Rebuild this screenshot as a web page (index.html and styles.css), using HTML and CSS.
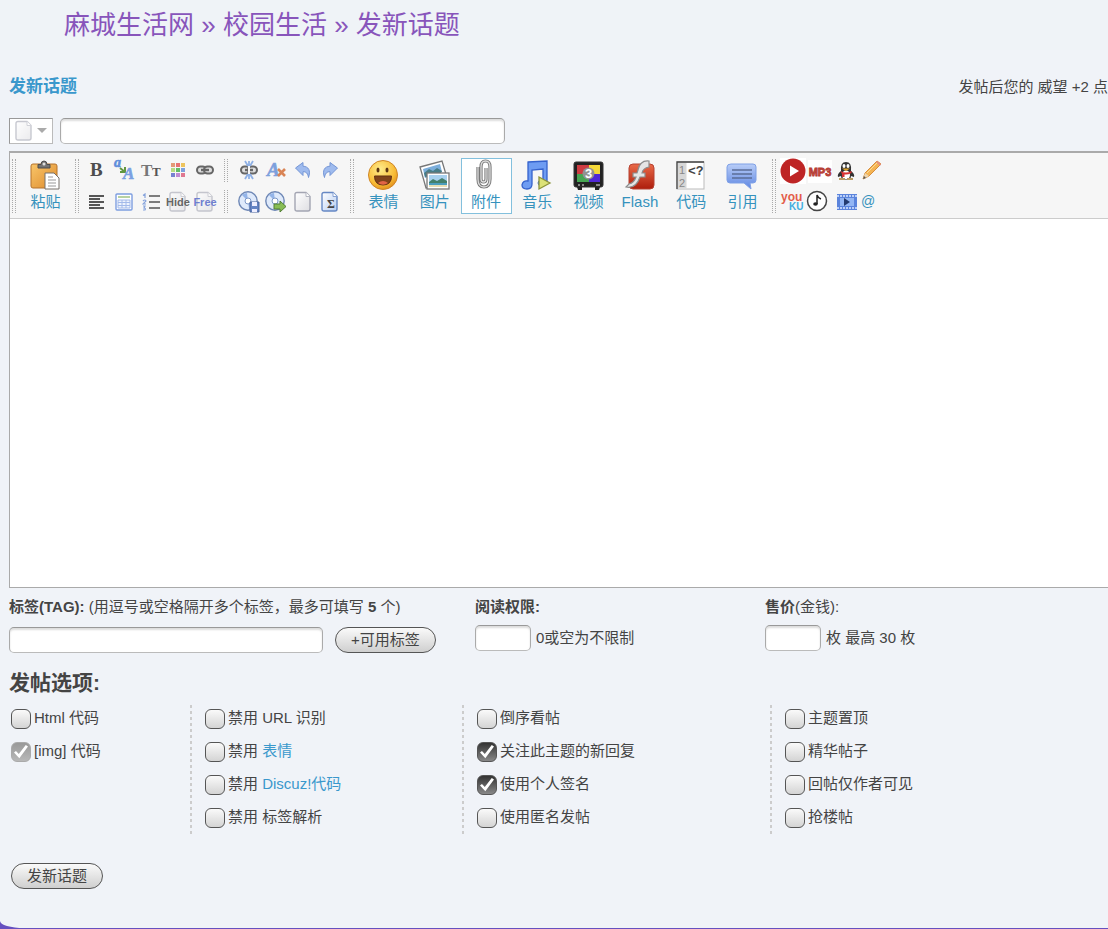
FILE: index.html
```html
<!DOCTYPE html>
<html lang="zh-CN">
<head>
<meta charset="utf-8">
<meta name="viewport" content="width=device-width, initial-scale=1">
<title>发新话题</title>
<link rel="stylesheet" href="styles.css">
</head>
<body>
<svg class="defs" aria-hidden="true">
  <defs>
    <linearGradient id="orange" x1="0" y1="0" x2="1" y2="1"><stop offset="0" stop-color="#f9c66a"/><stop offset="1" stop-color="#dd8a2c"/></linearGradient>
    <linearGradient id="blue" x1="0" y1="0" x2="0" y2="1"><stop offset="0" stop-color="#b9cdf7"/><stop offset="1" stop-color="#5d86e2"/></linearGradient>
    <linearGradient id="paper" x1="0" y1="0" x2="1" y2="1"><stop offset="0" stop-color="#ffffff"/><stop offset="1" stop-color="#dedee2"/></linearGradient>
    <linearGradient id="sheet" x1="0" y1="0" x2="1" y2="1"><stop offset="0" stop-color="#ffffff"/><stop offset="1" stop-color="#b6cdf2"/></linearGradient>
    <linearGradient id="red" x1="0" y1="0" x2="0" y2="1"><stop offset="0" stop-color="#ea6a48"/><stop offset="1" stop-color="#ad1d0c"/></linearGradient>
    <radialGradient id="face" cx=".4" cy=".3" r=".75"><stop offset="0" stop-color="#ffec8c"/><stop offset=".7" stop-color="#f8ba33"/><stop offset="1" stop-color="#de8a1c"/></radialGradient>
    <symbol id="disc" viewBox="0 0 22 22">
      <circle cx="10" cy="10" r="9.200" fill="#dfeafb" stroke="#6e87b5" stroke-width="1.400"/>
      <path d="M10 10 4 4a8 8 0 0 1 5-2ZM10 10l6 6a8 8 0 0 1-5 2Z" fill="#93b4e8"/>
      <circle cx="10" cy="10" r="3" fill="#fff" stroke="#7c98c8"/>
    </symbol>
    <symbol id="page" viewBox="0 0 18 22">
      <path d="M3 1.500h9l4 4v12.500q0 2-2 2H3q-2 0-2-2V3.500q0-2 2-2Z" fill="url(#paper)" stroke="#a3a5b2" stroke-width="1.400"/>
      <path d="M12 1.500v4h4" fill="#fff" stroke="#b3b5c0"/>
    </symbol>
    <symbol id="chain" viewBox="0 0 18 12">
      <g fill="#ddd" stroke="#666" stroke-width="2"><rect x="1" y="2.500" width="9" height="7" rx="3.500"/><rect x="8" y="2.500" width="9" height="7" rx="3.500"/></g>
      <path d="M5 6h8" stroke="#666" stroke-width="2.400"/>
    </symbol>
    <symbol id="undo" viewBox="0 0 18 18">
      <path d="M1.500 7 9 1.500v3.700c5.500.3 8 4.300 5.500 11.300-.5-4-2.500-6-5.500-5.800v3.800Z" fill="#9fbbee" stroke="#7596d6"/>
    </symbol>
  </defs>
</svg>
<main class="panel">
  <h1 class="crumbs"><a href="#">麻城生活网</a> » <a href="#">校园生活</a> » 发新话题</h1>
  <form class="post">
    <div class="head">
      <h2 class="head-title">发新话题</h2>
      <p class="head-note">发帖后您的 威望 +2 点</p>
    </div>

    <div class="subject">
      <button type="button" class="type-picker" aria-label="主题图标">
        <svg width="18" height="22" opacity=".6"><use href="#page"/></svg>
        <svg width="10" height="6"><path d="M0 0h10L5 5Z" fill="#aaa"/></svg>
      </button>
      <input type="text" class="field subject-field" aria-label="标题">
    </div>

    <div class="editor">
      <div class="toolbar">
        <span class="sep"></span>
        <button type="button" class="big">
          <svg width="32" height="32" viewBox="0 0 32 32">
            <rect x="1" y="5" width="26" height="24" rx="2" fill="url(#orange)" stroke="#b5732d"/>
            <path d="M8 5.500h3q0-3.500 3-3.500t3 3.500h3V9H8Z" fill="#737373" stroke="#4c4c4c"/>
            <circle cx="14" cy="5" r="1.500" fill="#ddd"/>
            <path d="M15 14h9l5 5v11H15Z" fill="#fff" stroke="#77716a"/>
            <path d="M18 18h5M18 21h8M18 24h8M18 27h8" stroke="#999"/>
          </svg>
          粘贴
        </button>
        <span class="sep"></span>

        <div class="icons icons-text">
          <button type="button" aria-label="粗体"><svg width="20" height="20"><text x="3" y="16" class="serif" font-size="19" font-weight="700" fill="#4d4d4d">B</text></svg></button>
          <button type="button" aria-label="字体"><svg width="24" height="24"><path d="m8 10 5 4m0-5v5H8" fill="none" stroke="#62973f" stroke-width="2"/><text x="2" y="9" class="serif" font-size="14" font-weight="700" font-style="italic" fill="#5f8edb" stroke="#5f8edb" stroke-width=".6">a</text><text x="11" y="21" class="serif" font-size="17" font-weight="700" font-style="italic" fill="#7aa0e2" stroke="#7aa0e2" stroke-width=".6">A</text></svg></button>
          <button type="button" aria-label="大小"><svg width="22" height="20"><text x="1" y="16" class="serif" font-size="17" font-weight="700" fill="#777">T</text><text x="12" y="16" class="serif" font-size="13" font-weight="700" fill="#555">T</text></svg></button>
          <button type="button" aria-label="颜色"><svg width="16" height="16"><path fill="#e49a78" d="M1 1h4v4H1z"/><path fill="#e87373" d="M6 1h4v4H6z"/><path fill="#edc45d" d="M11 1h4v4h-4z"/><path fill="#b8dc83" d="M1 6h4v4H1z"/><path fill="#64bd67" d="M6 6h4v4H6z"/><path fill="#7da2de" d="M11 6h4v4h-4z"/><path fill="#7782d0" d="M1 11h4v4H1z"/><path fill="#bf8bd3" d="M6 11h4v4H6z"/><path fill="#df7891" d="M11 11h4v4h-4z"/></svg></button>
          <button type="button" aria-label="链接"><svg width="18" height="12"><use href="#chain"/></svg></button>
          <button type="button" aria-label="对齐"><svg width="16" height="16"><path d="M0 2h15M0 5h11M0 8h15M0 11h11M0 14h15" stroke="#222" stroke-width="1.600"/></svg></button>
          <button type="button" aria-label="表格"><svg width="18" height="20"><rect x="1" y="2" width="16" height="16" rx="1" fill="#fff" stroke="#7e9ee0" stroke-width="1.400"/><path d="M3 4h12v2H3z" fill="#b7d2a3"/><path d="M3 8h12v8H3ZM7 8v8M11 8v8M3 10.500h12M3 13.500h12" fill="#eef3fd" stroke="#a3baea"/></svg></button>
          <button type="button" aria-label="列表"><svg width="18" height="18"><path d="M7 3h11M7 9h11M7 15h11" stroke="#555" stroke-width="1.600"/><path d="M1 2.500 3 1v4M1 8q2-2 3 0l-3 3h3M1 13h2l-1 2q2 0 1 2H1" fill="none" stroke="#86a3dc" stroke-width="1.200"/></svg></button>
          <button type="button" aria-label="隐藏"><svg width="26" height="22"><use href="#page" x="4" width="18" height="22" opacity=".6"/><text x="13" y="15" text-anchor="middle" class="caps" font-size="11" font-weight="700" fill="#666">Hide</text></svg></button>
          <button type="button" aria-label="免费"><svg width="26" height="22"><use href="#page" x="4" width="18" height="22" opacity=".6"/><text x="13" y="15" text-anchor="middle" class="caps" font-size="11" font-weight="700" fill="#6f80d0">Free</text></svg></button>
        </div>
        <span class="sep sep-split"></span>

        <div class="icons icons-edit">
          <button type="button" aria-label="移除链接"><svg width="20" height="20"><use href="#chain" x="1" y="4" width="18" height="12"/><path d="M9 4h2v12H9z" fill="#f6f6f6"/><path d="m6 1 3 5m5-5-3 5M6 19l3-5m5 5-3-5M10 1v5m0 8v5" fill="none" stroke="#8eb0e5" stroke-width="1.800"/></svg></button>
          <button type="button" aria-label="清除格式"><svg width="22" height="20"><text x="2" y="16" class="serif" font-size="19" font-weight="700" font-style="italic" fill="#7da0dc" stroke="#7da0dc" stroke-width=".6">A</text><path d="m13 9 7 7m0-7-7 7" stroke="#d98455" stroke-width="2.600"/></svg></button>
          <button type="button" aria-label="撤销"><svg width="18" height="18"><use href="#undo"/></svg></button>
          <button type="button" aria-label="重做"><svg width="18" height="18" class="flip"><use href="#undo"/></svg></button>
          <button type="button" aria-label="保存数据"><svg width="22" height="22"><use href="#disc"/><path d="M12 11h9v10h-9Z" fill="#6584c4" stroke="#4b659d"/><path d="M14 11h5v4h-5ZM14 18h5v3h-5Z" fill="#eef"/></svg></button>
          <button type="button" aria-label="恢复数据"><svg width="22" height="22"><use href="#disc"/><path d="M9 13h6v-3l6 5.500-6 5.500v-3H9Z" fill="#88bd55" stroke="#517e35"/></svg></button>
          <button type="button" aria-label="清空内容"><svg width="18" height="22"><use href="#page"/></svg></button>
          <button type="button" aria-label="公式"><svg width="18" height="22"><path d="M3 1.500h9l4 4v12.500q0 2-2 2H3q-2 0-2-2V3.500q0-2 2-2Z" fill="url(#sheet)" stroke="#6688c4" stroke-width="1.400"/><path d="M12 1.500v4h4" fill="#fff" stroke="#86a2d4"/><text x="6" y="17" class="serif" font-size="12" font-weight="700" fill="#444">Σ</text></svg></button>
        </div>
        <span class="sep"></span>

        <div class="bigs">
          <button type="button" class="big">
            <svg width="32" height="32" viewBox="0 0 32 32"><circle cx="15" cy="16" r="14.500" fill="url(#face)" stroke="#cf8526"/><ellipse cx="10" cy="11" rx="1.500" ry="2.500" fill="#5c3512"/><ellipse cx="19" cy="11" rx="1.500" ry="2.500" fill="#5c3512"/><path d="M6.500 17h17q0 9-8.500 9t-8.500-9Z" fill="#80431a" stroke="#643010"/><path d="M10 24q5-4 10 0-5 3.500-10 0Z" fill="#e26446"/></svg>
            表情
          </button>
          <button type="button" class="big">
            <svg width="32" height="32" viewBox="0 0 32 32"><path d="m1 8 22-6 6 20-22 7Z" fill="#fff" stroke="#777" stroke-width="1.300"/><path d="m4 10 17-5 2 8-17 6Z" fill="#7caedb"/><path d="m5 14 5-4 4 2 4-3 5 3-1 2-16 4Z" fill="#477d87"/><rect x="8" y="14" width="22" height="16" fill="#fff" stroke="#777" stroke-width="1.300"/><path d="M10 16h18v12H10z" fill="#a8d1ef"/><path d="m10 23 4-3 4 2 5-3 5 3v2H10Z" fill="#43806c"/><path d="M10 24h18v2H10z" fill="#4b9ebd"/><path d="M10 26h18v2H10z" fill="#e8dfb5"/></svg>
            图片
          </button>
          <button type="button" class="big big-on">
            <svg width="32" height="32" viewBox="0 0 32 32"><g fill="none"><path d="M16 9v11q0 3-2.500 3T11 20V8q0-6 4.500-6T20 8v12q0 8-6 8t-6-8V8" stroke="#777" stroke-width="3.200"/><path d="M16 9v11q0 3-2.500 3T11 20V8q0-6 4.500-6T20 8v12q0 8-6 8t-6-8V8" stroke="#ddd" stroke-width="1.300"/></g></svg>
            附件
          </button>
          <button type="button" class="big">
            <svg width="32" height="32" viewBox="0 0 32 32"><path d="M7 3 26 2v21h-4V10L11 11v14q0 5-5 5t-5-4q1-5 6-4Z" fill="#6e9cf2" stroke="#3562cc" stroke-width="1.300"/><ellipse cx="21" cy="24" rx="4" ry="3" fill="#6e9cf2" stroke="#3562cc"/><path d="m18 18 11 6-11 6Z" fill="#dce277" stroke="#8d943b" stroke-width="1.300"/></svg>
            音乐
          </button>
          <button type="button" class="big">
            <svg width="32" height="32" viewBox="0 0 32 32"><rect x="1" y="3" width="29" height="25" rx="2" fill="#222" stroke="#333"/><path d="M4 28h5v3H5ZM22 28h5l-1 3h-4Z" fill="#222"/><path d="M4 6h12v9H4z" fill="#cf3c42"/><path d="M16 6h11v9H16z" fill="#f4d838"/><path d="M4 15h12v8H4z" fill="#46a552"/><path d="M16 15h11v8H16z" fill="#5127d6"/><circle cx="15.500" cy="14.500" r="6" fill="#929292"/><text x="12" y="19" class="caps" font-size="13" font-weight="700" fill="#fff">3</text><path d="M5 26h2m2 0h2m12 0h4" stroke="#aaa" stroke-width="1.300"/></svg>
            视频
          </button>
          <button type="button" class="big">
            <svg width="32" height="32" viewBox="0 0 32 32"><rect x="5" y="5" width="25" height="25" rx="4" fill="url(#red)" stroke="#b64333"/><path d="M25 2q-9-1-11 9l-1 3h-4v4h3q-2 6-7 7l-3 3q10 2 14-10h5v-4h-3q1-5 7-6Z" fill="#e5e5e5" stroke="#8c8c8c" stroke-width="1.200"/></svg>
            Flash
          </button>
          <button type="button" class="big">
            <svg width="32" height="32" viewBox="0 0 32 32"><rect x="2" y="3" width="27" height="27" fill="#fff" stroke="#bbb"/><path d="M2.500 3.500h9v26h-9z" fill="#d7d7d7"/><path d="M2 30V3h27" fill="none" stroke="#444" stroke-width="1.300"/><text x="4" y="15" class="caps" font-size="11" fill="#888">1</text><text x="4" y="28" class="caps" font-size="11" fill="#888">2</text><text x="13" y="16" class="mono" font-size="13" font-weight="700" fill="#444">&lt;?</text></svg>
            代码
          </button>
          <button type="button" class="big">
            <svg width="32" height="32" viewBox="0 0 32 32"><path d="M5 5h22q3 0 3 3v13q0 3-3 3h-3l1 6-7-6H4q-3 0-3-3V8q0-3 4-3Z" fill="url(#blue)" stroke="#7fa0e6"/><path d="M6 11h20M6 15h20M6 19h20" stroke="#5b6e98" stroke-width="1.500"/></svg>
            引用
          </button>
        </div>
        <span class="sep"></span>

        <div class="extras">
          <div class="extras-row">
            <button type="button" aria-label="播放器"><svg width="26" height="26"><path d="M0 0h26v26H0z" fill="#fff"/><circle cx="13" cy="13" r="12.500" fill="#be2525"/><path d="m10 7.500 9 5.500-9 5.500Z" fill="#fff"/></svg></button>
            <button type="button" aria-label="MP3"><svg width="24" height="26"><path d="M0 2h24v23H0z" fill="#fff"/><text x="12" y="18" text-anchor="middle" class="caps" font-weight="700" font-size="11" fill="#d34b40" stroke="#b03a32" stroke-width=".8">MP3</text></svg></button>
            <button type="button" aria-label="QQ"><svg width="24" height="24"><path d="M7 12q-1-9 5-9t5 9q4 3 3 6l-3-1q0 4-5 4t-5-4l-3 1q-1-3 3-6Z" fill="#333"/><ellipse cx="12" cy="16" rx="4" ry="4.500" fill="#fff"/><ellipse cx="10" cy="7" rx="1.500" ry="2" fill="#fff"/><ellipse cx="14" cy="7" rx="1.500" ry="2" fill="#fff"/><path d="M8 9.500h8L12 12Z" fill="#e0a52b"/><path d="M6.500 12q5.500 3 11 0v2q-4 2-7 1.500V18H8v-3Z" fill="#d63232"/><path d="M5 19h6v2H5ZM13 19h6v2h-6Z" fill="#b99a62"/></svg></button>
            <button type="button" aria-label="涂鸦"><svg width="24" height="24"><path d="m3 20 2-6L17 2l4 3L9 17Z" fill="#f4b453" stroke="#d78d3b"/><path d="m16 3 1-1 4 3-1 2Z" fill="#e58d84"/><path d="m3 20 2-6 4 3Z" fill="#ecd5af"/><path d="m3 20 1-3 2 2Z" fill="#555"/><path d="m7 14 10-10" stroke="#fbdc95"/></svg></button>
          </div>
          <div class="extras-row">
            <button type="button" aria-label="优酷"><svg width="24" height="22"><text x="1" y="11" class="caps" font-size="12" font-weight="700" fill="#e35d4a">you</text><text x="9" y="20" class="caps" font-size="10" font-weight="700" fill="#42aee0">KU</text></svg></button>
            <button type="button" aria-label="在线音乐"><svg width="22" height="22"><circle cx="11" cy="11" r="9.500" fill="#fff" stroke="#444" stroke-width="1.500"/><path d="M11 14V5q1 3 4 4" fill="none" stroke="#222" stroke-width="1.500"/><ellipse cx="9.500" cy="14" rx="2.300" ry="1.800" fill="#222"/></svg></button>
            <button type="button" class="film" aria-label="在线视频"><svg width="22" height="18"><path d="M1 2h20v16H1z" fill="#5b84dc"/><path d="M1 4h20M1 16h20" stroke="#dce8ff" stroke-width="1.500" stroke-dasharray="2 1"/><path d="M4 6h14v8H4z" fill="#93b6f4"/><path d="m8 6 6 4-6 4Z" fill="#243b70"/></svg></button>
            <button type="button" class="at" aria-label="@提到">@</button>
          </div>
        </div>
      </div>
      <textarea class="content" aria-label="内容"></textarea>
    </div>

    <div class="meta">
      <div class="meta-item">
        <label for="tags"><b>标签(TAG):</b> (用逗号或空格隔开多个标签，最多可填写 <b>5</b> 个)</label>
        <div class="meta-line meta-tags">
          <input type="text" id="tags" class="field tag-field">
          <button type="button" class="pill pill-tags">+可用标签</button>
        </div>
      </div>
      <div class="meta-item">
        <label for="perm"><b>阅读权限:</b></label>
        <div class="meta-line"><input type="text" id="perm" class="field short-field"><span>0或空为不限制</span></div>
      </div>
      <div class="meta-item">
        <label for="price"><b>售价</b>(金钱):</label>
        <div class="meta-line"><input type="text" id="price" class="field short-field"><span>枚 最高 30 枚</span></div>
      </div>
    </div>

    <h3 class="options-title">发帖选项:</h3>
    <div class="options">
      <div class="options-col">
        <label><input type="checkbox">Html 代码</label>
        <label><input type="checkbox" checked disabled>[img] 代码</label>
      </div>
      <div class="options-col">
        <label><input type="checkbox">禁用 URL 识别</label>
        <label><input type="checkbox"><span>禁用 <a href="#">表情</a></span></label>
        <label><input type="checkbox"><span>禁用 <a href="#">Discuz!代码</a></span></label>
        <label><input type="checkbox">禁用 标签解析</label>
      </div>
      <div class="options-col">
        <label><input type="checkbox">倒序看帖</label>
        <label><input type="checkbox" checked>关注此主题的新回复</label>
        <label><input type="checkbox" checked>使用个人签名</label>
        <label><input type="checkbox">使用匿名发帖</label>
      </div>
      <div class="options-col">
        <label><input type="checkbox">主题置顶</label>
        <label><input type="checkbox">精华帖子</label>
        <label><input type="checkbox">回帖仅作者可见</label>
        <label><input type="checkbox">抢楼帖</label>
      </div>
    </div>
    <button type="submit" class="pill pill-submit">发新话题</button>
  </form>
</main>
</body>
</html>
```
FILE: styles.css
```css
* {
  box-sizing: border-box;
}

body {
  margin: 0;
  background: #6650c0;
  color: #444;
  font: 15px/20px "Liberation Sans", "Noto Sans CJK SC", sans-serif;
}

button,
input,
textarea {
  font: inherit;
  color: inherit;
}

button {
  padding: 0;
  border: 0;
  background: none;
  cursor: pointer;
}

svg {
  display: block;
  flex: none;
}

a {
  color: #3a98cc;
  text-decoration: none;
}

.defs {
  position: absolute;
  width: 0;
  height: 0;
}

.panel {
  min-height: calc(100vh - 1px);
  padding-bottom: 32px;
  border-bottom-left-radius: 24px 7px;
  background: #f0f3f8;
}

.crumbs {
  margin: 0;
  padding: 0 64px;
  background: #eff3f7;
  color: #8855bb;
  font-size: 26px;
  font-weight: 400;
  line-height: 50px;
}

.crumbs a {
  color: inherit;
}

.post {
  padding-left: 9px;
}

.head {
  display: flex;
  align-items: center;
  justify-content: space-between;
  height: 68px;
  padding-top: 6px;
}

.head-title {
  margin: 0;
  color: #3a98cc;
  font-size: 17px;
}

.head-note {
  margin: 0;
  white-space: nowrap;
}

.subject {
  display: flex;
  gap: 7px;
  margin-bottom: 7px;
}

.type-picker {
  display: flex;
  align-items: center;
  gap: 4px;
  width: 44px;
  height: 26px;
  padding-left: 5px;
  border: 1px solid #bbb;
  border-left-color: #999;
  border-top-color: #999;
  background: #fff;
}

.field {
  height: 26px;
  padding: 0 6px;
  border: 1px solid #aaa;
  border-color: #999 #aaa #bbb;
  border-radius: 5px;
  background: #fff;
  box-shadow: inset 0 2px 2px #ddd;
}

.subject-field {
  width: 445px;
}

.editor {
  border: 1px solid #aaa;
  border-top: 2px solid #aaa;
  border-right: 0;
}

.toolbar {
  display: flex;
  align-items: center;
  gap: 4px;
  padding: 1px 0 0 2px;
  border-bottom: 1px solid #ccc;
  background: #f6f6f6;
}

.toolbar > * {
  flex: none;
}

.sep {
  width: 4px;
  height: 54px;
  border: dotted #aaa;
  border-width: 0 1px;
}

.sep-split {
  display: flex;
  flex-direction: column;
  gap: 8px;
  border: 0;
}

.sep-split::before,
.sep-split::after {
  flex: 1;
  border: dotted #aaa;
  border-width: 0 1px;
  content: "";
}

.big {
  display: flex;
  flex-direction: column;
  align-items: center;
  width: 51px;
  height: 56px;
  border: 1px solid transparent;
  color: #3592bd;
  line-height: 21px;
}

.big-on {
  border-color: #83c0dd;
  background: #fff;
}

.bigs {
  display: flex;
  justify-content: space-between;
  width: 410px;
}

.icons {
  display: grid;
  grid-auto-rows: 32px;
}

.icons-text {
  grid-template-columns: repeat(5, 27px);
  padding-right: 2px;
}

.icons-edit {
  grid-template-columns: repeat(4, 27px);
  padding: 0 3px;
}

.icons button,
.extras button {
  display: flex;
  align-items: center;
  justify-content: center;
}

.flip {
  transform: scaleX(-1);
}

.serif {
  font-family: "Liberation Serif", serif;
}

.caps {
  font-family: "Liberation Sans", sans-serif;
}

.mono {
  font-family: "Liberation Mono", monospace;
}

.extras {
  display: grid;
  grid-auto-rows: 30px;
}

.extras-row {
  display: flex;
  align-items: center;
  gap: 2px;
}

.extras .film {
  margin-left: 6px;
}

.extras .at {
  width: 16px;
  color: #3592bd;
  font-size: 14px;
}

.content {
  display: block;
  width: 100%;
  height: 368px;
  padding: 8px;
  border: 0;
  background: #fff;
  resize: none;
}

.meta {
  display: grid;
  grid-template-columns: 466fr 290fr 343fr;
  padding-top: 9px;
}

.meta-item label {
  white-space: nowrap;
}

.meta-line {
  display: flex;
  align-items: center;
  gap: 5px;
  margin-top: 8px;
}

.meta-tags {
  gap: 12px;
  margin-top: 10px;
}

.tag-field {
  width: 314px;
}

.short-field {
  width: 56px;
}

.pill {
  height: 26px;
  padding: 0 15px;
  border: 1px solid #555;
  border-radius: 13px;
  background: linear-gradient(#fafafa, #cfcfcf);
  line-height: 24px;
}

.pill-submit {
  margin: 26px 0 0 2px;
}

.options-title {
  margin: 16px 0 8px;
  font-size: 21px;
  line-height: 28px;
}

.options {
  display: grid;
  grid-template-columns: 181fr 272fr 308fr 338fr;
}

.options-col {
  padding-left: 15px;
  background: repeating-linear-gradient(#ccc 0 3px, transparent 3px 6px) left / 2px 100% no-repeat;
}

.options-col:first-child {
  padding-left: 2px;
  background: none;
}

.options-col label {
  display: flex;
  align-items: center;
  gap: 3px;
  height: 33px;
  padding-bottom: 8px;
}

.options-col input {
  position: relative;
  flex: none;
  appearance: none;
  width: 20px;
  height: 20px;
  margin: 2px 0 0;
  border: 1px solid #555;
  border-radius: 6px;
  background: linear-gradient(#fafafa, #d4d4d4);
}

.options-col input:checked {
  background: linear-gradient(#333, #888);
}

.options-col input:checked::after {
  position: absolute;
  inset: 2px;
  background: #fff;
  clip-path: polygon(0 58%, 14% 46%, 34% 68%, 84% 4%, 100% 14%, 38% 98%);
  content: "";
}

.options-col input:disabled {
  border-color: #aaa;
  background: linear-gradient(#999, #b8b8b8);
}
```
